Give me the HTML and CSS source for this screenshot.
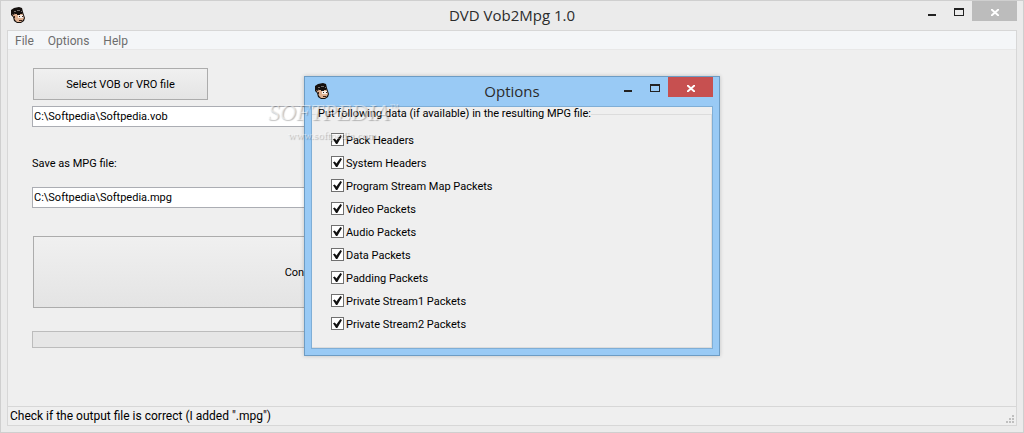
FILE: index.html
```
<!DOCTYPE html>
<html lang="en">
<head>
  <meta charset="UTF-8" />
  <meta name="viewport" content="width=device-width, initial-scale=1" />
  <title>DVD Vob2Mpg 1.0</title>
  <link rel="stylesheet" href="styles.css">
</head>
<body>
  <!-- shared face icon -->
  <svg class="defs" width="0" height="0" aria-hidden="true">
    <symbol id="face" viewBox="0 0 14 16">
      <path d="M0 3 L3 1 L8 0 L11 1 L12 5 L13 8 L14 11 L13 14 L10 16 L6 16 L3 14 L2 10 L0 8 Z" fill="#15100e"/>
      <path d="M1 7 L3 8 L4 6 L11 6 L12 8 L13 11 L12 13 L10 15 L6 15 L4 13 L3 10 Z" fill="#e0b191"/>
      <path d="M4 6 H11 V7 H9 V8 H6 V7 H4 Z" fill="#15100e"/>
      <path d="M7 8 H12 V11 H7 Z" fill="#f8efe8"/>
      <path d="M8 9 H9 V10 H8 Z M11 9 H12 V10 H11 Z M8 13 H11 V14 H8 Z M3 9 H4 V11 H3 Z" fill="#3a241a"/>
      <path d="M3 4 H5 V5 H3 Z M6 3 H9 V4 H6 Z M10 4 H11 V5 H10 Z" fill="#77716f"/>
    </symbol>
  </svg>

  <div class="window">
    <header class="titlebar">
      <svg class="app-icon" viewBox="0 0 14 16"><use href="#face"/></svg>
      <h1 class="title">DVD Vob2Mpg 1.0</h1>
      <div class="win-buttons">
        <button class="win-btn" aria-label="Minimize"><span class="min"></span></button>
        <button class="win-btn" aria-label="Maximize"><span class="max"></span></button>
        <button class="win-btn close" aria-label="Close">
          <svg width="8" height="7" viewBox="0 0 8 7"><path d="M0 0 L8 7 M8 0 L0 7" stroke="#fff" stroke-width="2"/></svg>
        </button>
      </div>
    </header>

    <div class="client">
      <nav class="menu">
        <button>File</button>
        <button>Options</button>
        <button>Help</button>
      </nav>

      <main class="content">
        <button class="btn select">Select VOB or VRO file</button>
        <input class="path" type="text" value="C:\Softpedia\Softpedia.vob" aria-label="VOB file">
        <label class="save-label" for="mpg">Save as MPG file:</label>
        <input class="path" id="mpg" type="text" value="C:\Softpedia\Softpedia.mpg">
        <button class="btn convert">Convert</button>
        <div class="progress" role="progressbar" aria-label="Progress"></div>
      </main>

      <footer class="status">
        <span>Check if the output file is correct (I added ".mpg")</span>
        <svg class="grip" width="8" height="8" viewBox="0 0 8 8">
          <path d="M6 0h2v2h-2z M3 3h2v2h-2z M6 3h2v2h-2z M0 6h2v2h-2z M3 6h2v2h-2z M6 6h2v2h-2z" fill="#bfbfbf"/>
        </svg>
      </footer>
    </div>
  </div>

  <section class="dialog" role="dialog" aria-label="Options">
    <header class="titlebar">
      <svg class="app-icon" viewBox="0 0 14 16"><use href="#face"/></svg>
      <h2 class="title">Options</h2>
      <div class="win-buttons">
        <button class="win-btn" aria-label="Minimize"><span class="min"></span></button>
        <button class="win-btn" aria-label="Maximize"><span class="max"></span></button>
        <button class="win-btn close" aria-label="Close">
          <svg width="8" height="7" viewBox="0 0 8 7"><path d="M0 0 L8 7 M8 0 L0 7" stroke="#fff" stroke-width="2"/></svg>
        </button>
      </div>
    </header>
    <div class="dialog-body">
      <fieldset class="group">
        <legend>Put following data (if available) in the resulting MPG file:</legend>
        <label><input type="checkbox" checked> Pack Headers</label>
        <label><input type="checkbox" checked> System Headers</label>
        <label><input type="checkbox" checked> Program Stream Map Packets</label>
        <label><input type="checkbox" checked> Video Packets</label>
        <label><input type="checkbox" checked> Audio Packets</label>
        <label><input type="checkbox" checked> Data Packets</label>
        <label><input type="checkbox" checked> Padding Packets</label>
        <label><input type="checkbox" checked> Private Stream1 Packets</label>
        <label><input type="checkbox" checked> Private Stream2 Packets</label>
      </fieldset>
    </div>
  </section>

  <div class="watermark">
    <div class="brand">SOFTPEDIA<sup>™</sup></div>
    <div class="site">www.softpedia.com</div>
  </div>
</body>
</html>
```

FILE: styles.css
```
:root {
  --ui-font: Roboto, "Liberation Sans", sans-serif;
  --title-font: "Open Sans", "Noto Sans", sans-serif;
  --face: #efefef;
  --line: #d7d7d7;
}
* {
  box-sizing: border-box;
}
body {
  margin: 0;
  font: 11px/16px var(--ui-font);
  color: #000;
}
button, input {
  font: inherit;
  color: inherit;
}
.defs {
  position: absolute;
}

/* main window */
.window {
  display: flex;
  flex-direction: column;
  min-height: 100vh;
  padding: 0 6px 6px;
  background: #ebebeb;
  border: 1px solid #cfcfcf;
}
.titlebar {
  display: grid;
  grid-template-columns: 1fr auto 1fr;
  height: 29px;
}
.app-icon {
  width: 14px;
  height: 16px;
  margin: 6px 0 0 4px;
}
.title {
  margin: 0;
  font: 15px/28px var(--title-font);
  color: #2b2b2b;
}
.win-buttons {
  display: flex;
  justify-content: flex-end;
  align-items: flex-start;
}
.win-btn {
  display: flex;
  align-items: center;
  justify-content: center;
  width: 27px;
  height: 20px;
  padding: 0;
  border: 0;
  background: none;
}
.win-btn.close {
  width: 45px;
  background: #bcbcbc;
}
.close svg {
  margin-top: 2px;
}
.min {
  width: 8px;
  height: 2px;
  margin-top: 8px;
  background: #222;
}
.max {
  width: 10px;
  height: 8px;
  margin-top: 1px;
  border: 1px solid #222;
  border-top-width: 2px;
}
.client {
  flex: 1;
  display: flex;
  flex-direction: column;
  background: var(--face);
  border: 1px solid var(--line);
}
.menu {
  display: flex;
  gap: 14px;
  height: 19px;
  padding: 0 7px;
  background: #f4f6f8;
  border-bottom: 1px solid #e8e8e8;
}
.menu button {
  padding: 0;
  border: 0;
  background: none;
  font: 12px/20px var(--ui-font);
  color: #6d6d6d;
}
.content {
  flex: 1;
  display: flex;
  flex-direction: column;
  align-items: flex-start;
  width: 57%;
  padding: 18px 8px 0 24px;
}
.btn {
  margin-left: 1px;
  padding: 2px 0 0;
  border: 1px solid #acacac;
  background: linear-gradient(#f0f0f0, #e4e4e4);
}
.select {
  width: 175px;
  height: 32px;
}
.path {
  width: 100%;
  height: 21px;
  margin-top: 6px;
  padding: 0 1px;
  border: 1px solid #abadb3;
  background: #fff;
}
.save-label {
  margin: 29px 0 9px;
}
.convert {
  align-self: stretch;
  height: 72px;
  margin-top: 28px;
}
.progress {
  width: 100%;
  height: 17px;
  margin-top: 23px;
  border: 1px solid #bcbcbc;
  background: #e6e6e6;
}
.status {
  display: flex;
  justify-content: space-between;
  align-items: flex-end;
  height: 19px;
  padding: 0 2px;
  border-top: 1px solid var(--line);
  font-size: 12px;
  line-height: 18px;
}
.grip {
  margin-bottom: 2px;
}

/* options dialog, floats over the window */
.dialog {
  position: absolute;
  left: 304px;
  top: 76px;
  width: 416px;
  padding: 0 6px 6px;
  background: #99caf5;
  border: 1px solid #6d9cc4;
  box-shadow: 0 0 4px rgba(0, 0, 0, 0.2);
}
.dialog .close {
  background: #c75050;
}
.dialog-body {
  background: var(--face);
  border: 1px solid #7faed6;
}
.group {
  display: flex;
  flex-direction: column;
  gap: 7px;
  margin: 0;
  padding: 12px 0 14px 18px;
  border: 1px solid #dcdcdc;
  border-left: 0;
}
.group legend {
  margin-left: -12px;
  padding: 0;
  line-height: 14px;
}
.group label {
  display: flex;
  align-items: flex-start;
  gap: 2px;
}
.group input {
  appearance: none;
  width: 13px;
  height: 13px;
  margin: 0 0 0 1px;
  border: 1px solid #707070;
  background: #fff;
}
.group input:checked::before {
  content: "";
  display: block;
  width: 9px;
  height: 9px;
  margin: 1px;
  background: #111;
  clip-path: polygon(0 48%, 20% 40%, 38% 62%, 82% 0, 100% 10%, 48% 100%, 34% 100%);
}

.watermark {
  position: absolute;
  left: 268px;
  top: 99px;
  font-family: "Liberation Serif", serif;
  color: rgba(255, 255, 255, 0.5);
  text-shadow: 1px 1px 1px rgba(0, 0, 0, 0.25);
  pointer-events: none;
}
.brand {
  font-size: 23px;
  font-style: italic;
  line-height: 28px;
}
.brand sup {
  font-size: 9px;
  line-height: 1;
  vertical-align: 10px;
}
.site {
  padding-left: 20px;
  font-size: 11px;
  line-height: 16px;
}
```
